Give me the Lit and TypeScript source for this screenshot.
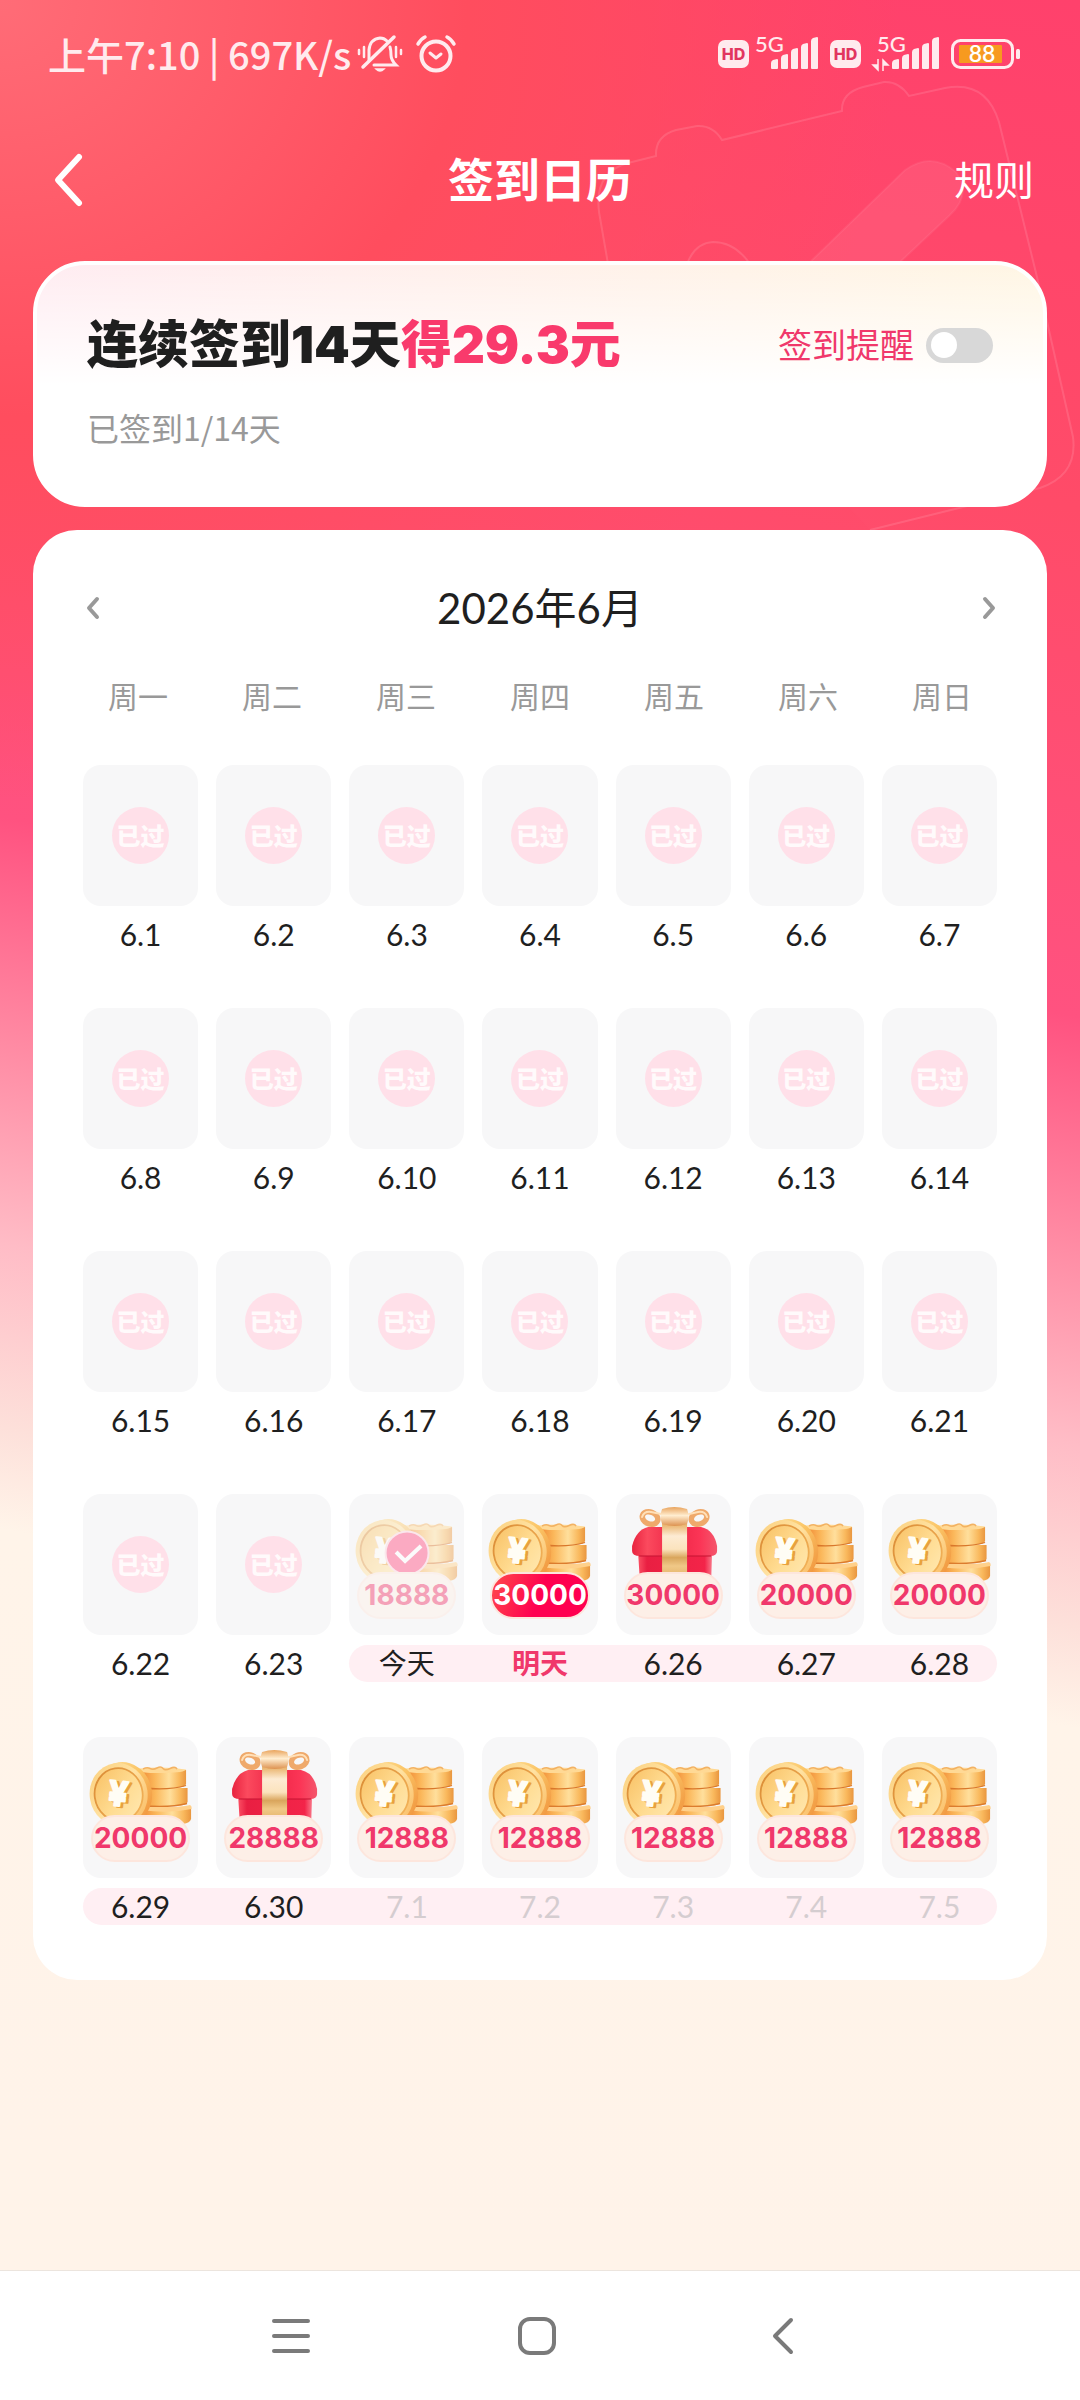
import { LitElement, html, css, svg, nothing } from 'lit';
import { customElement, property, state } from 'lit/decorators.js';
import { classMap } from 'lit/directives/class-map.js';

type Art = 'coins' | 'gift';

interface Day {
  label: string;
  past?: boolean;
  art?: Art;
  amount?: string;
  today?: boolean;
  tomorrow?: boolean;
  outside?: boolean;
  band?: 'start' | 'mid' | 'end';
}

const WEEKDAYS = ['周一', '周二', '周三', '周四', '周五', '周六', '周日'];

const past = (from: number, to: number): Day[] =>
  Array.from({ length: to - from + 1 }, (_, i) => ({ label: `6.${from + i}`, past: true }));

const WEEKS: Day[][] = [
  past(1, 7),
  past(8, 14),
  past(15, 21),
  [
    ...past(22, 23),
    { label: '今天', art: 'coins', amount: '18888', today: true, band: 'start' },
    { label: '明天', art: 'coins', amount: '30000', tomorrow: true, band: 'mid' },
    { label: '6.26', art: 'gift', amount: '30000', band: 'mid' },
    { label: '6.27', art: 'coins', amount: '20000', band: 'mid' },
    { label: '6.28', art: 'coins', amount: '20000', band: 'end' },
  ],
  [
    { label: '6.29', art: 'coins', amount: '20000', band: 'start' },
    { label: '6.30', art: 'gift', amount: '28888', band: 'mid' },
    { label: '7.1', art: 'coins', amount: '12888', outside: true, band: 'mid' },
    { label: '7.2', art: 'coins', amount: '12888', outside: true, band: 'mid' },
    { label: '7.3', art: 'coins', amount: '12888', outside: true, band: 'mid' },
    { label: '7.4', art: 'coins', amount: '12888', outside: true, band: 'mid' },
    { label: '7.5', art: 'coins', amount: '12888', outside: true, band: 'end' },
  ],
];

const coinsArt = html`
  <svg class="art" viewBox="0 0 115 141" aria-hidden="true">
    <defs>
      <linearGradient id="disc" x1="0" x2="1">
        <stop offset="0" stop-color="#f08a35" />
        <stop offset=".3" stop-color="#fbb75a" />
        <stop offset=".62" stop-color="#ffdf9c" />
        <stop offset=".85" stop-color="#f9b85c" />
        <stop offset="1" stop-color="#e9963f" />
      </linearGradient>
      <linearGradient id="edge" x1="0" y1="0" x2="1" y2="1">
        <stop offset="0" stop-color="#ffe7a6" />
        <stop offset=".5" stop-color="#fbc566" />
        <stop offset="1" stop-color="#ee8a35" />
      </linearGradient>
      <linearGradient id="rim" x1="0" y1="0" x2="1" y2="1">
        <stop offset="0" stop-color="#fbcf7c" />
        <stop offset=".5" stop-color="#ffe2a2" />
        <stop offset="1" stop-color="#f9b65a" />
      </linearGradient>
      <linearGradient id="face" x1="0" y1="0" x2="1" y2="1">
        <stop offset="0" stop-color="#f8bf62" />
        <stop offset=".55" stop-color="#ffdc92" />
        <stop offset="1" stop-color="#ffe9b4" />
      </linearGradient>
      <linearGradient id="ring" x1="0" y1="0" x2="1" y2="1">
        <stop offset="0" stop-color="#d98a34" />
        <stop offset="1" stop-color="#f5b65c" />
      </linearGradient>
    </defs>
    <path d="M58 70h50v12q-1 4-8 5H58z" fill="url(#disc)" />
    <path d="M58 68q30 4 49 0 2 1 1.500 4-24 5-50 1z" fill="#ffd08a" />
    <path d="M58 51h46.500v14q-1 3-7 3.500-20 2-39.500 0z" fill="url(#disc)" />
    <path d="M58 68.500q28 2.500 46-2" fill="none" stroke="#dc7c2e" stroke-width="1.300" />
    <path d="M58 33h45v14q-1 3-7 3.500-20 2-38 0z" fill="url(#disc)" />
    <path d="M60 51q26 2.500 43-2.500" fill="none" stroke="#d9772b" stroke-width="1.300" />
    <path d="M57 31.500q24-2.500 46 1-1 3-22 3.500t-26-2z" fill="#ffd995" />
    <path d="M60 32q4-2 7-.5t7-.5 6 .5 7 0 7 .5" fill="none" stroke="#f3b262" stroke-width="1.500" />
    <ellipse cx="40" cy="57" rx="29" ry="32" fill="url(#edge)" transform="rotate(-8 40 57)" />
    <ellipse cx="35.500" cy="57.500" rx="29" ry="31.500" fill="url(#rim)" transform="rotate(-8 36 57)" />
    <ellipse cx="35.500" cy="57.500" rx="24" ry="26.500" fill="url(#face)" stroke="url(#ring)" stroke-width="1.800" transform="rotate(-8 36 57)" />
    <text class="yen yen-shade" x="38" y="70" transform="rotate(6 36 57)">¥</text>
    <text class="yen" x="35" y="69" transform="rotate(6 36 57)">¥</text>
  </svg>
`;

const giftArt = html`
  <svg class="art" viewBox="0 0 115 141" aria-hidden="true">
    <defs>
      <linearGradient id="lid" x1="0" x2="1">
        <stop offset="0" stop-color="#e8233f" />
        <stop offset=".18" stop-color="#fb4a5e" />
        <stop offset=".5" stop-color="#ee2546" />
        <stop offset=".8" stop-color="#fb3556" />
        <stop offset="1" stop-color="#f4566c" />
      </linearGradient>
      <linearGradient id="box" x1="0" x2="1">
        <stop offset="0" stop-color="#fb5064" />
        <stop offset=".12" stop-color="#e91f42" />
        <stop offset=".9" stop-color="#f32449" />
        <stop offset="1" stop-color="#f9788a" />
      </linearGradient>
      <linearGradient id="ribbon" x1="0" x2="0" y1="0" y2="1">
        <stop offset="0" stop-color="#e8b067" />
        <stop offset=".2" stop-color="#fdebd3" />
        <stop offset=".42" stop-color="#fbe3bd" />
        <stop offset=".56" stop-color="#d9a55c" />
        <stop offset=".7" stop-color="#f0c887" />
        <stop offset="1" stop-color="#dda659" />
      </linearGradient>
      <linearGradient id="knot" x1="0" x2="0" y1="0" y2="1">
        <stop offset="0" stop-color="#e9a45d" />
        <stop offset=".45" stop-color="#ffedd0" />
        <stop offset="1" stop-color="#dd9250" />
      </linearGradient>
    </defs>
    <path d="M22 58h74l-1 32H24z" fill="url(#box)" />
    <path d="M32 33h53q13 3 16 19v5q0 5-7 5H24q-8 0-8-5v-5q4-16 16-19z" fill="url(#lid)" />
    <path d="M23 62h72" stroke="#c91634" stroke-width="1.500" opacity=".7" />
    <path d="M46 30h25v60H46z" fill="url(#ribbon)" />
    <ellipse cx="34" cy="24" rx="8" ry="6" fill="none" stroke="#efa96b" stroke-width="5.500" transform="rotate(22 34 24)" />
    <ellipse cx="83" cy="24" rx="8" ry="6" fill="none" stroke="#efa96b" stroke-width="5.500" transform="rotate(-22 83 24)" />
    <path d="M26 23q2-6 9-5l10 2M91 23q-2-6-9-5l-9 2" fill="none" stroke="#ffe0b8" stroke-width="2" stroke-linecap="round" />
    <path d="M46 15q12-4 25 0 3 8 0 15-12 4-25 0-3-8 0-15z" fill="url(#knot)" />
  </svg>
`;

const checkArt = svg`
  <circle cx="58" cy="59" r="21.500" fill="#ff4d82" stroke="#ffd3de" stroke-width="2" />
  <path d="M47 58l9 9 16-15" fill="none" stroke="#fff" stroke-width="4" />
`;

const bars = (x: number) => svg`
  <g fill="currentColor">
    ${[8, 13, 19, 24, 30].map((h, i) => {
      const left = x + i * 10;
      return svg`<path d=${`M${left} ${36 - h}q0-2 2-3l4-1q1 0 1 1v${h}q0 1-1 1h-5q-1 0-1-1z`} />`;
    })}
  </g>
`;

@customElement('status-bar')
export class StatusBar extends LitElement {
  static styles = css`
    :host {
      display: flex;
      justify-content: space-between;
      align-items: center;
      height: 108px;
      padding: 0 60px 0 48px;
      color: #ffebee;
    }
    .side {
      display: flex;
      align-items: center;
      gap: 12px;
    }
    .line {
      display: flex;
      align-items: center;
      gap: 6px;
    }
    .time {
      font: 500 38px/48px 'Noto Sans CJK SC', sans-serif;
      white-space: pre;
    }
    .hd {
      width: 31px;
      height: 28px;
      border-radius: 7px;
      background: #ffebee;
      color: #e2355f;
      font: 800 16px/28px Inter, sans-serif;
      text-align: center;
    }
    svg {
      display: block;
    }
    .net {
      font: 500 22px Lato, sans-serif;
      fill: currentColor;
    }
    .charge {
      font: 600 23px Lato, sans-serif;
      fill: #fff;
    }
  `;

  render() {
    return html`
      <div class="side">
        <div class="line">
          <span class="time">上午7:10 | 697K/s</span>
          <svg width="46" height="42" viewBox="0 0 46 42" fill="none" stroke="currentColor" stroke-width="3" stroke-linecap="round">
            <path d="M12 27V17q1-11 11-12 4 0 7 3M33 14q1 3 1 8 0 5 5 10H17" />
            <path d="M37 4L6 34" stroke-width="3.500" />
            <path d="M2 17v4M7 14v10M39 14v10M44 17v4" stroke-width="2.500" />
            <path d="M19 36h8q-4 4-8 0z" fill="currentColor" stroke-width="1.500" />
          </svg>
        </div>
        <svg width="42" height="42" viewBox="0 0 42 42" fill="none" stroke="currentColor" stroke-linecap="round">
          <circle cx="21" cy="23" r="14.500" stroke-width="4" />
          <path d="M15 20l6 5 5-4" stroke-width="3" stroke-linejoin="round" />
          <path d="M3 11q3-5 7-7M32 4q4 2 7 7" stroke-width="3.500" />
        </svg>
      </div>
      <div class="side">
        <div class="line">
          <span class="hd">HD</span>
          <svg width="63" height="46" viewBox="0 -4 63 46">
            <text class="net" x="0" y="17">5G</text>
            ${bars(16)}
          </svg>
        </div>
        <div class="line">
          <span class="hd">HD</span>
          <svg width="72" height="46" viewBox="0 -4 72 46">
            <text class="net" x="10" y="17">5G</text>
            ${bars(25)}
            <path d="M11 24v11l-5-5h5M16 36V25l5 5h-5" fill="currentColor" stroke="currentColor" stroke-width="1.500" />
          </svg>
        </div>
        <svg width="69" height="32" viewBox="0 0 69 32">
          <rect x="1.500" y="2.500" width="60" height="27" rx="8" fill="none" stroke="currentColor" stroke-width="3" />
          <rect x="8" y="7" width="43" height="18" rx="1" fill="#f79a1f" />
          <rect x="65" y="11" width="4" height="10" rx="1.500" fill="currentColor" />
          <text class="charge" x="31" y="24" text-anchor="middle">88</text>
        </svg>
      </div>
    `;
  }
}

@customElement('day-tile')
export class DayTile extends LitElement {
  static styles = css`
    :host {
      display: grid;
      height: 141px;
      border-radius: 18px;
      background: #f7f7f8;
      overflow: hidden;
    }
    .stack {
      display: grid;
    }
    .stack > * {
      grid-area: 1 / 1;
    }
    .today {
      opacity: 0.45;
    }
    .stamp {
      place-self: center;
      width: 57px;
      border-radius: 50%;
      background: #ffe0e9;
      color: #fffafb;
      font-size: 24px;
      font-weight: 900;
      line-height: 57px;
      text-align: center;
      white-space: nowrap;
    }
    .art {
      width: 100%;
      height: 141px;
    }
    .yen {
      font: 700 34px Inter, sans-serif;
      fill: #fffdf5;
      stroke: #fffdf5;
      stroke-width: 2px;
      stroke-linejoin: round;
      text-anchor: middle;
    }
    .yen-shade {
      fill: #e9a23c;
      stroke: #e9a23c;
    }
    .pill {
      display: flex;
      justify-content: center;
      align-self: end;
      box-sizing: border-box;
      height: 47px;
      margin: 0 8px 16px;
      border: 2px solid #fde6dd;
      border-radius: 24px;
      background: #fdefe7;
      color: #f0386b;
      font: 700 28px/42px Inter, sans-serif;
    }
    .hot {
      background: linear-gradient(110deg, #ff4a4a, #ff0050 50%);
      color: #fff;
    }
  `;

  @property({ attribute: false }) day!: Day;

  render() {
    const { day } = this;
    if (day.past) return html`<div class="stack"><span class="stamp">已过</span></div>`;
    return html`
      <div class=${classMap({ stack: true, today: !!day.today })}>
        ${day.art === 'gift' ? giftArt : coinsArt}
        ${day.today ? html`<svg class="art" viewBox="0 0 115 141" aria-hidden="true">${checkArt}</svg>` : nothing}
        <span class=${classMap({ pill: true, hot: !!day.tomorrow })}>${day.amount}</span>
      </div>
    `;
  }
}

@customElement('app-root')
export class AppRoot extends LitElement {
  static styles = css`
    :host {
      position: relative;
      display: flex;
      flex-direction: column;
      min-height: 100vh;
      color: #1f1f1f;
      font-family: Lato, 'Noto Sans CJK SC', sans-serif;
      background:
        radial-gradient(ellipse 900px 800px at 0 0, #ff6c77, #ff4d5e 52%, transparent),
        linear-gradient(190.5deg, #ff416c 0, #ff4b68 500px, #ff5280 1000px, #ff8aa3 1220px, #ffbcc6 1420px, #fde0da 1600px, #fff4e9 1700px, #fff3e9 2300px);
    }
    * {
      box-sizing: border-box;
    }
    button {
      display: flex;
      padding: 0;
      border: 0;
      background: none;
      color: inherit;
      cursor: pointer;
    }
    h1,
    h2,
    p {
      margin: 0;
    }
    .backdrop {
      position: absolute;
      top: 0;
      right: 0;
    }
    status-bar,
    .nav,
    main {
      position: relative;
    }
    .nav {
      display: grid;
      grid-template-columns: 1fr auto 1fr;
      align-items: center;
      height: 144px;
      padding: 0 46px;
      color: #fff;
    }
    .nav h1 {
      font-size: 46px;
      font-weight: 700;
      line-height: 60px;
    }
    .rules {
      justify-self: end;
      color: #fff;
      font-size: 40px;
      line-height: 60px;
      text-decoration: none;
    }
    main {
      display: grid;
      gap: 23px;
      padding: 9px 33px 96px;
    }
    .card {
      background: #fff;
    }
    .summary {
      padding: 50px 50px 56px;
      border: 4px solid #fff;
      border-radius: 52px;
      background:
        linear-gradient(180deg, transparent, #fff 120px),
        linear-gradient(90deg, #ffecf1, #fff6e4);
    }
    .row {
      display: flex;
      justify-content: space-between;
      align-items: center;
    }
    .goal {
      font-family: Inter, 'Noto Sans CJK SC', sans-serif;
      font-size: 51px;
      font-weight: 900;
      line-height: 60px;
    }
    .goal em {
      color: #f93a6c;
      font-style: normal;
    }
    .remind {
      display: flex;
      align-items: center;
      gap: 12px;
      color: #f0386b;
      font-size: 34px;
      line-height: 60px;
    }
    .switch {
      display: flex;
      align-items: center;
      appearance: none;
      width: 67px;
      height: 35px;
      margin: 0;
      padding: 0 5px;
      border-radius: 18px;
      background: #d8d8d8;
      cursor: pointer;
    }
    .switch::before {
      content: '';
      width: 26px;
      height: 26px;
      border-radius: 50%;
      background: #fff;
    }
    .switch:checked {
      justify-content: flex-end;
      background: #f93a6c;
    }
    .progress {
      margin-top: 32px;
      color: #999;
      font: 400 32px/40px 'Noto Sans CJK SC', sans-serif;
    }
    .calendar {
      padding: 48px 38px 55px;
      border-radius: 44px;
    }
    .month {
      padding: 0 12px;
    }
    .month h2 {
      font-size: 42px;
      font-weight: 400;
      line-height: 60px;
    }
    .month button {
      color: #999;
    }
    table,
    thead,
    tbody {
      display: block;
    }
    tr {
      display: grid;
      grid-template-columns: repeat(7, minmax(0, 1fr));
    }
    thead tr {
      margin: 38px 0 49px;
    }
    th {
      padding: 0;
      color: #999;
      font-size: 30px;
      font-weight: 400;
      line-height: 40px;
    }
    tbody {
      display: grid;
      gap: 55px;
      padding: 0 12px;
    }
    tbody tr {
      column-gap: 18px;
    }
    td {
      padding: 0;
    }
    .date {
      display: block;
      margin-top: 10px;
      font-size: 30px;
      line-height: 37px;
      text-align: center;
    }
    .band {
      margin-right: -18px;
      padding-right: 18px;
      background: #ffeff3;
    }
    .start {
      border-radius: 19px 0 0 19px;
    }
    .end {
      margin-right: 0;
      padding-right: 0;
      border-radius: 0 19px 19px 0;
    }
    .word {
      font-size: 28px;
    }
    .tomorrow {
      color: #f0386b;
      font-weight: 700;
    }
    .outside {
      color: #d5cdd0;
    }
    .system {
      position: relative;
      display: flex;
      justify-content: center;
      height: 130px;
      margin-top: auto;
      padding-right: 6px;
      border-top: 1px solid #ece5de;
      background: #fff;
    }
    .system button {
      flex: 0 1 246px;
      justify-content: center;
      align-items: center;
      color: #7a7a7a;
    }
  `;

  @state() private remind = false;

  private toggleRemind(e: Event) {
    this.remind = (e.target as HTMLInputElement).checked;
  }

  private renderDay(day: Day) {
    const classes = {
      date: true,
      band: !!day.band,
      start: day.band === 'start',
      end: day.band === 'end',
      word: !!day.today || !!day.tomorrow,
      tomorrow: !!day.tomorrow,
      outside: !!day.outside,
    };
    return html`
      <td>
        <day-tile .day=${day}></day-tile>
        <span class=${classMap(classes)}>${day.label}</span>
      </td>
    `;
  }

  render() {
    return html`
      <svg class="backdrop" width="500" height="540" viewBox="580 0 500 540" fill="none" stroke="#fff" stroke-opacity=".12" stroke-width="2" aria-hidden="true">
        <path
          d="M608 264L599 212Q594 172 628 163L656 156Q655 136 676 130L697 126Q713 125 722 140L842 111Q841 93 863 87L884 82Q899 81 909 96L945 88Q986 80 999 122L1037 277L1073 437Q1078 475 1040 488L870 530"
          fill="#ff5a80"
          fill-opacity=".08"
        />
        <path d="M687 264Q695 243 713 242Q735 242 750 264" />
        <path d="M808 264L905 170Q932 151 956 172Q972 195 950 215L898 264z" fill="#fff" fill-opacity=".07" stroke-opacity=".06" />
      </svg>

      <status-bar></status-bar>

      <header class="nav">
        <button aria-label="返回">
          <svg width="40" height="56" viewBox="0 0 40 56" fill="none" stroke="currentColor" stroke-width="6" stroke-linecap="round" stroke-linejoin="round">
            <path d="M33 5L12 28l21 23" />
          </svg>
        </button>
        <h1>签到日历</h1>
        <a class="rules" href="#rules">规则</a>
      </header>

      <main>
        <section class="card summary">
          <div class="row">
            <h2 class="goal">连续签到14天<em>得29.3元</em></h2>
            <label class="remind">
              签到提醒
              <input class="switch" type="checkbox" role="switch" .checked=${this.remind} @change=${this.toggleRemind} />
            </label>
          </div>
          <p class="progress">已签到1/14天</p>
        </section>

        <section class="card calendar">
          <div class="row month">
            <button aria-label="上个月">
              <svg width="20" height="28" viewBox="0 0 20 28" fill="none" stroke="currentColor" stroke-width="4" stroke-linecap="round" stroke-linejoin="round">
                <path d="M14 5L6 14l8 9" />
              </svg>
            </button>
            <h2>2026年6月</h2>
            <button aria-label="下个月">
              <svg width="20" height="28" viewBox="0 0 20 28" fill="none" stroke="currentColor" stroke-width="4" stroke-linecap="round" stroke-linejoin="round">
                <path d="M8 5l8 9-8 9" />
              </svg>
            </button>
          </div>
          <table>
            <thead>
              <tr>
                ${WEEKDAYS.map((d) => html`<th scope="col">${d}</th>`)}
              </tr>
            </thead>
            <tbody>
              ${WEEKS.map((week) => html`<tr>${week.map((day) => this.renderDay(day))}</tr>`)}
            </tbody>
          </table>
        </section>
      </main>

      <nav class="system">
        <button aria-label="最近任务">
          <svg width="40" height="40" viewBox="0 0 40 40" stroke="currentColor" stroke-width="4" stroke-linecap="round">
            <path d="M3 5h34M3 20h34M3 35h34" />
          </svg>
        </button>
        <button aria-label="主屏幕">
          <svg width="40" height="40" viewBox="0 0 40 40" fill="none" stroke="currentColor" stroke-width="4">
            <rect x="3" y="3" width="34" height="34" rx="10" />
          </svg>
        </button>
        <button aria-label="返回上一页">
          <svg width="40" height="40" viewBox="0 0 40 40" fill="none" stroke="currentColor" stroke-width="4" stroke-linecap="round" stroke-linejoin="round">
            <path d="M28 4L12 20l16 16" />
          </svg>
        </button>
      </nav>
    `;
  }
}
